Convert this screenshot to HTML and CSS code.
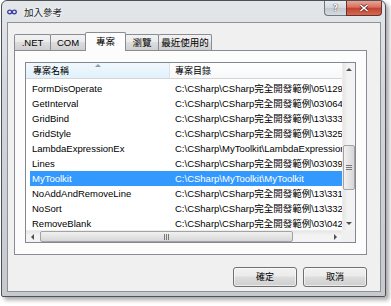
FILE: index.html
```html
<html lang="zh-Hant">
<head>
    <meta charset="UTF-8">
    <title>加入參考</title>
    <link rel="stylesheet" href="styles.css">
</head>
<body>
    <div class="window">
        <div class="titlebar">
            <svg class="app-icon" width="10" height="6" viewBox="0 0 10 6">
                <ellipse cx="2.7" cy="3" rx="2" ry="1.8" fill="none" stroke="#3a3aa0" stroke-width="1.3"/>
                <ellipse cx="7.3" cy="3" rx="2" ry="1.8" fill="none" stroke="#3a3aa0" stroke-width="1.3"/>
            </svg>
            <span class="title">加入參考</span>
            <div class="caption-btns">
                <div class="cap-help">?</div>
                <div class="cap-close">
                    <svg width="10" height="8" viewBox="0 0 10 8">
                        <path d="M1.5 1 L8.5 7 M8.5 1 L1.5 7" stroke="#6a2a20" stroke-width="3"/>
                        <path d="M1.5 1 L8.5 7 M8.5 1 L1.5 7" stroke="#fff" stroke-width="1.6"/>
                    </svg>
                </div>
            </div>
        </div>
        <div class="client">
            <div class="tabs">
                <div class="tab tab-net">.NET</div>
                <div class="tab tab-com">COM</div>
                <div class="tab tab-proj selected">專案</div>
                <div class="tab tab-browse">瀏覽</div>
                <div class="tab tab-recent">最近使用的</div>
            </div>
            <div class="panel">
                <div class="listview">
                    <div class="lv-main">
                        <div class="lv-header">
                            <div class="hd hd-name sorted">專案名稱<span class="sort-arrow"></span></div>
                            <div class="hd hd-dir">專案目錄</div>
                        </div>
                        <div class="lv-rows">
                            <div class="row"><span class="c1">FormDisOperate</span><span class="c2">C:\CSharp\CSharp完全開發範例\05\129\FormDisOperate</span></div>
                            <div class="row"><span class="c1">GetInterval</span><span class="c2">C:\CSharp\CSharp完全開發範例\03\064\GetInterval</span></div>
                            <div class="row"><span class="c1">GridBind</span><span class="c2">C:\CSharp\CSharp完全開發範例\13\333\GridBind</span></div>
                            <div class="row"><span class="c1">GridStyle</span><span class="c2">C:\CSharp\CSharp完全開發範例\13\325\GridStyle</span></div>
                            <div class="row"><span class="c1">LambdaExpressionEx</span><span class="c2">C:\CSharp\MyToolkit\LambdaExpressionEx</span></div>
                            <div class="row"><span class="c1">Lines</span><span class="c2">C:\CSharp\CSharp完全開發範例\03\039\Lines</span></div>
                            <div class="row selected"><span class="c1">MyToolkit</span><span class="c2">C:\CSharp\MyToolkit\MyToolkit</span></div>
                            <div class="row"><span class="c1">NoAddAndRemoveLine</span><span class="c2">C:\CSharp\CSharp完全開發範例\13\331\NoAddAndRemoveLine</span></div>
                            <div class="row"><span class="c1">NoSort</span><span class="c2">C:\CSharp\CSharp完全開發範例\13\332\NoSort</span></div>
                            <div class="row"><span class="c1">RemoveBlank</span><span class="c2">C:\CSharp\CSharp完全開發範例\03\042\RemoveBlank</span></div>
                        </div>
                    </div>
                    <div class="vscroll">
                        <div class="sb-btn"><span class="arr arr-up"></span></div>
                        <div class="sb-gap-top"></div>
                        <div class="sb-thumb v-thumb"><span class="grip"></span></div>
                        <div class="sb-fill"></div>
                        <div class="sb-btn"><span class="arr arr-down"></span></div>
                    </div>
                    <div class="hscroll">
                        <div class="sb-btn"><span class="arr arr-left"></span></div>
                        <div class="sb-thumb h-thumb"><span class="grip"></span></div>
                        <div class="sb-fill"></div>
                        <div class="sb-btn"><span class="arr arr-right"></span></div>
                    </div>
                    <div class="corner"></div>
                </div>
            </div>
            <div class="buttons">
                <div class="btn">確定</div>
                <div class="btn">取消</div>
            </div>
        </div>
    </div>
</body>
</html>
```
FILE: styles.css
```css
* {
    box-sizing: border-box;
    margin: 0;
}
body {
    background: #ffffff;
    font-family: "Liberation Sans", "Noto Sans CJK TC", sans-serif;
    font-size: 9.5px;
    color: #000;
}
.window { /* aero frame */
    margin-left: 1px;
    width: 385px;
    height: 297px;
    border: 1px solid #4d5157;
    border-radius: 6px 6px 2px 2px;
    background: linear-gradient(#e4e7ea, #d3d7db 30%, #c6cace);
    box-shadow: 3px 3px 4px rgba(0, 0, 0, 0.35);
    padding: 0 4px 4px 5px;
    display: flex;
    flex-direction: column;
}
.titlebar {
    height: 21px;
    display: flex;
    align-items: center;
}
.app-icon {
    margin-left: 0px;
    margin-top: 0px;
}
.title {
    margin-left: 7px;
    font-family: "Noto Sans CJK TC", sans-serif;
    font-size: 9.5px;
    color: #1a1a1a;
    text-shadow: 0 0 5px #fff, 0 0 3px #fff;
}
.caption-btns {
    margin-left: auto;
    align-self: flex-start;
    display: flex;
    margin-right: -1px;
}
.cap-help {
    width: 22px;
    height: 15px;
    border: 1px solid #6f7780;
    border-top: none;
    border-right: none;
    border-radius: 0 0 0 4px;
    background: linear-gradient(#e9ecef, #d3d8dd 50%, #c2c8ce 51%, #d6dbe0);
    color: #f4f4f4;
    text-shadow: 0 0 1px #555, 0 0 1px #555;
    font-family: "DejaVu Sans", sans-serif;
    font-weight: bold;
    font-size: 9px;
    text-align: center;
    line-height: 14px;
}
.cap-close {
    width: 36px;
    height: 15px;
    border: 1px solid #6b3028;
    border-top: none;
    border-radius: 0 0 4px 0;
    background: linear-gradient(#eaa495, #d7705f 45%, #c4412c 50%, #d06a56);
    display: flex;
    align-items: center;
    justify-content: center;
}
.client {
    flex: 1;
    border: 1px solid #8e9298;
    background: #f0f0f0;
    padding: 9px 13px 0 6px;
}
.tabs {
    height: 18px;
    display: flex;
    align-items: flex-end;
}
.tab { /* unselected tabs */
    height: 16px;
    border: 1px solid #898c95;
    border-bottom: none;
    border-radius: 2px 2px 0 0;
    background: linear-gradient(#f2f2f2, #ebebeb 45%, #dddddd 50%, #cfcfcf);
    text-align: center;
    line-height: 15px;
    margin-left: -1px;
    font-family: "Liberation Sans", "Noto Sans CJK TC", sans-serif;
}
.tab-net { width: 37px; margin-left: 0; }
.tab-com { width: 36px; }
.tab-proj { width: 41px; }
.tab-browse { width: 34px; }
.tab-recent { width: 54px; }
.tab.selected {
    height: 19px;
    margin-bottom: -1px;
    background: #fcfcfc;
    position: relative;
    z-index: 1;
    line-height: 17px;
}
.panel {
    width: 353px;
    border: 1px solid #898c95;
    background: #fcfcfc;
    padding: 11px 10px;
}
.listview {
    width: 331px;
    height: 181px;
    border: 1px solid #828790;
    background: #fff;
    display: grid;
    grid-template-columns: 1fr 13px;
    grid-template-rows: 1fr 12px;
}
.lv-main {
    overflow: hidden;
}
.lv-header {
    height: 16px;
    display: flex;
    border-bottom: 1px solid #d5d5d5;
}
.hd {
    line-height: 15px;
    white-space: nowrap;
    overflow: hidden;
    font-family: "Noto Sans CJK TC", sans-serif;
    font-size: 9px;
    background: linear-gradient(#ffffff, #f7f8fa);
}
.hd-name {
    width: 144px;
    padding-left: 7px;
    border-right: 1px solid #dde3ea;
    position: relative;
}
.hd.sorted {
    background: linear-gradient(#f0f8fd, #e1f1fb);
}
.sort-arrow { /* little sort caret over the header */
    position: absolute;
    top: 1px;
    left: 69px;
    border-left: 3px solid transparent;
    border-right: 3px solid transparent;
    border-bottom: 3px solid #8d9cae;
}
.hd-dir {
    flex: 1;
    padding-left: 5px;
}
.lv-rows {
    padding: 2px 0 0 4px;
}
.row {
    height: 15px;
    line-height: 15px;
    display: flex;
    white-space: nowrap;
}
.row.selected {
    background: #3399ff;
    color: #fff;
}
.c1 {
    width: 140px;
    padding-left: 2px;
    flex-shrink: 0;
}
.c2 {
    padding-left: 5px;
    overflow: hidden;
}
.vscroll, .hscroll {
    display: flex;
    background: linear-gradient(90deg, #e6e6e6, #f3f3f3 40%, #f3f3f3);
}
.vscroll {
    flex-direction: column;
    border-left: 1px solid #ededed;
}
.hscroll {
    background: linear-gradient(#e6e6e6, #f3f3f3 40%, #f3f3f3);
    border-top: 1px solid #ededed;
}
.sb-btn {
    width: 12px;
    height: 13px;
    display: flex;
    align-items: center;
    justify-content: center;
    flex-shrink: 0;
}
.hscroll .sb-btn {
    width: 13px;
    height: 11px;
}
.sb-gap-top {
    height: 69px;
}
.sb-fill {
    flex: 1;
}
.sb-thumb {
    border: 1px solid #a3a3a3;
    border-radius: 2px;
    display: flex;
    align-items: center;
    justify-content: center;
}
.v-thumb {
    height: 45px;
    background: linear-gradient(90deg, #f1f1f1, #e4e4e4 50%, #d6d6d6);
}
.h-thumb {
    width: 253px;
    margin-left: 1px;
    background: linear-gradient(#f1f1f1, #e4e4e4 50%, #d6d6d6);
}
.grip {
    display: block;
}
.v-thumb .grip {
    width: 6px;
    height: 5px;
    border-top: 1px solid #777;
    border-bottom: 1px solid #777;
    background: linear-gradient(transparent 1px, #777 1px, #777 2px, transparent 2px);
}
.h-thumb .grip {
    width: 5px;
    height: 6px;
    border-left: 1px solid #777;
    border-right: 1px solid #777;
    background: linear-gradient(90deg, transparent 1px, #777 1px, #777 2px, transparent 2px);
}
.arr {
    width: 0;
    height: 0;
}
.arr-up {
    border-left: 3px solid transparent;
    border-right: 3px solid transparent;
    border-bottom: 3px solid #505050;
}
.arr-down {
    border-left: 3px solid transparent;
    border-right: 3px solid transparent;
    border-top: 3px solid #505050;
}
.arr-left {
    border-top: 3px solid transparent;
    border-bottom: 3px solid transparent;
    border-right: 3px solid #505050;
}
.arr-right {
    border-top: 3px solid transparent;
    border-bottom: 3px solid transparent;
    border-left: 3px solid #505050;
}
.corner {
    background: #f0f0f0;
}
.buttons {
    margin-top: 12px;
    display: flex;
    justify-content: flex-end;
    gap: 6px;
}
.btn { /* win7 push button */
    width: 64px;
    height: 20px;
    border: 1px solid #707070;
    border-radius: 3px;
    background: linear-gradient(#f2f2f2, #ebebeb 45%, #dddddd 50%, #cfcfcf);
    text-align: center;
    line-height: 18px;
    font-family: "Noto Sans CJK TC", sans-serif;
    font-size: 9px;
    box-shadow: inset 0 0 0 1px rgba(255, 255, 255, 0.6);
}
```
